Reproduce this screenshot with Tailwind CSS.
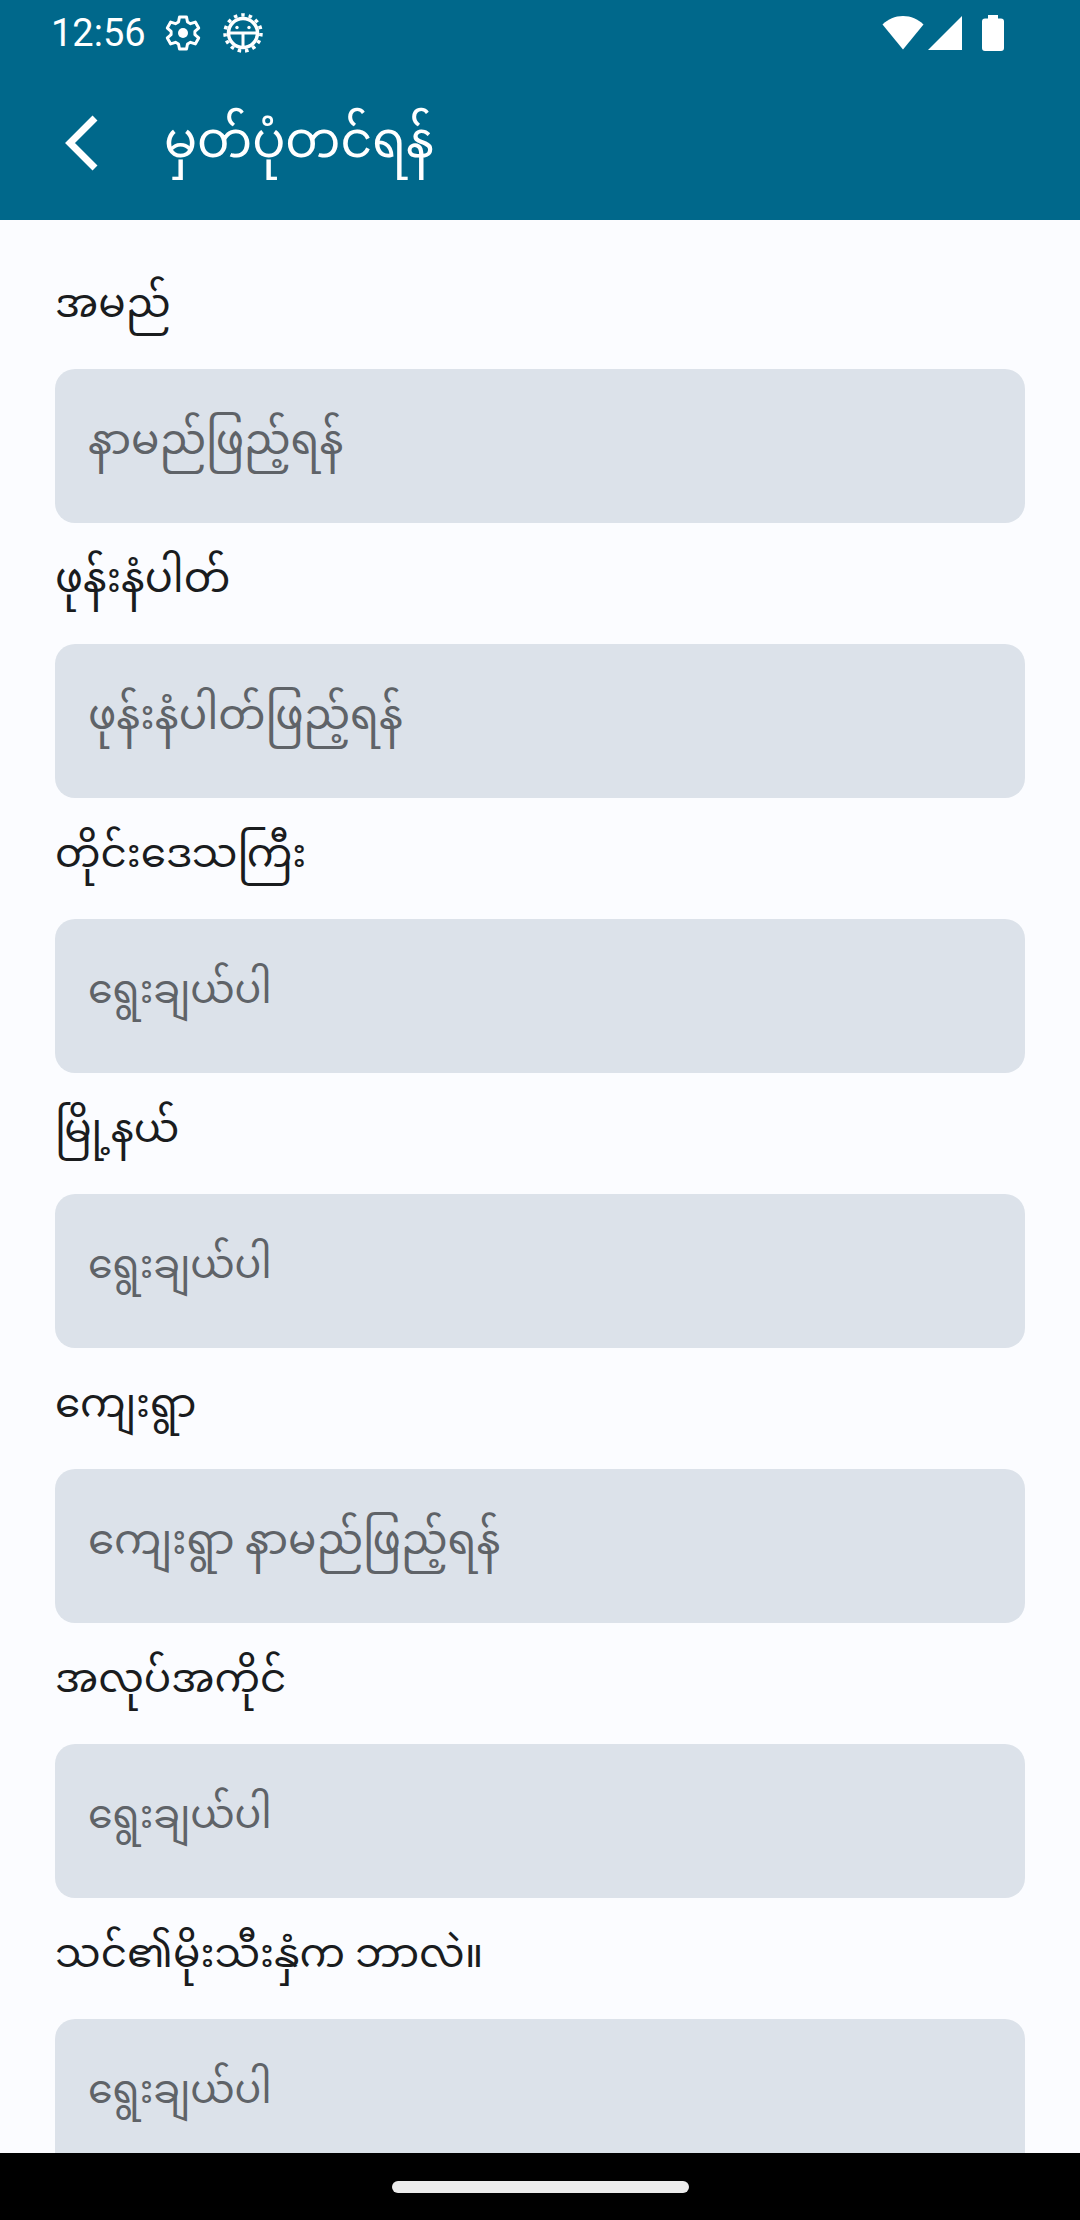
<!DOCTYPE html>
<html lang="my">
<head>
    <meta charset="UTF-8">
    <meta name="viewport" content="width=device-width, initial-scale=1.0">
    <title>မှတ်ပုံတင်ရန်</title>
    <script src="https://cdn.jsdelivr.net/npm/@tailwindcss/browser@4"></script>
</head>
<body class="bg-black font-['Roboto','Noto_Sans','Noto_Sans_Myanmar','Padauk',sans-serif]">
    <div class="w-[1080px] h-[2220px] flex flex-col overflow-hidden">
        <!-- Status bar -->
        <div class="h-[66px] shrink-0 bg-[#00688b] text-white flex items-center pl-[51px] pr-[76px]">
            <span class="text-[38px] leading-none font-['Roboto',sans-serif] w-[112px]">12:56</span>
            <svg class="ml-[1px]" width="38" height="38" viewBox="0 0 38 38" fill="none" stroke="white" stroke-width="3" stroke-linejoin="round">
                <path d="M15.500 3h7l1 5 3 1.700 4.800-1.600 3.400 6-3.800 3.300v3.200l3.800 3.300-3.400 6-4.800-1.600-3 1.700-1 5h-7l-1-5-3-1.700-4.800 1.600-3.400-6 3.800-3.300v-3.200l-3.800-3.300 3.400-6 4.800 1.600 3-1.700z"/>
                <circle cx="19" cy="19" r="5" fill="white" stroke="none"/>
            </svg>
            <svg class="ml-[21px]" width="40" height="40" viewBox="0 0 40 40" fill="none" stroke="white">
                <circle cx="20" cy="20" r="14.500" stroke-width="3.500"/>
                <circle cx="20" cy="20" r="18" stroke-width="3.500" stroke-dasharray="3.500 4"/>
                <path d="M6 20h28M20 20v14" stroke-width="3"/>
                <circle cx="14" cy="14.500" r="1.700" fill="white" stroke="none"/>
                <circle cx="26" cy="14.500" r="1.700" fill="white" stroke="none"/>
            </svg>
            <svg class="ml-auto" width="42" height="36" viewBox="0 0 42 36" fill="white"><path d="M21 34.500 0.500 9.500C6 4.200 13 1 21 1s15 3.200 20.500 8.500z"/></svg>
            <svg class="ml-[4px]" width="34" height="34" viewBox="0 0 34 34" fill="white"><path d="M34 0v34H0z"/></svg>
            <svg class="ml-[20px]" width="22" height="36" viewBox="0 0 22 36" fill="white"><path d="M6 0h10v3.500h3a3 3 0 0 1 3 3V33a3 3 0 0 1-3 3H3a3 3 0 0 1-3-3V6.500a3 3 0 0 1 3-3h3z"/></svg>
        </div>

        <!-- Toolbar -->
        <div class="h-[154px] shrink-0 bg-[#00688b] flex items-center pb-[12px]">
            <svg class="ml-[64px] mt-[12px]" width="34" height="56" viewBox="0 0 34 56" fill="none" stroke="white" stroke-width="7"><path d="M31 3 6 28l25 25"/></svg>
            <h1 class="ml-[66px] mt-[6px] text-[49px] leading-none text-white font-normal">မှတ်ပုံတင်ရန်</h1>
        </div>

        <!-- Form -->
        <div class="h-[1933px] shrink-0 bg-[#fbfcff] px-[55px] pt-[39px] overflow-hidden flex flex-col">
            <div class="h-[110px] shrink-0 flex items-center pb-[21px] text-[40.500px] text-[#1a1c1e]">အမည်</div>
            <div class="h-[154px] shrink-0 rounded-[20px] bg-[#dce2ea] px-[33px] pb-[13px] flex items-center text-[42px] text-[#5f6368] mb-[11px]">နာမည်ဖြည့်ရန်</div>
            <div class="h-[110px] shrink-0 flex items-center pb-[21px] text-[41.500px] text-[#1a1c1e]">ဖုန်းနံပါတ်</div>
            <div class="h-[154px] shrink-0 rounded-[20px] bg-[#dce2ea] px-[33px] pb-[13px] flex items-center text-[42px] text-[#5f6368] mb-[11px]">ဖုန်းနံပါတ်ဖြည့်ရန်</div>
            <div class="h-[110px] shrink-0 flex items-center pb-[21px] text-[40.500px] text-[#1a1c1e]">တိုင်းဒေသကြီး</div>
            <div class="h-[154px] shrink-0 rounded-[20px] bg-[#dce2ea] px-[33px] pb-[13px] flex items-center text-[39.500px] text-[#5f6368] mb-[11px]">ရွေးချယ်ပါ</div>
            <div class="h-[110px] shrink-0 flex items-center pb-[21px] text-[40.500px] text-[#1a1c1e]">မြို့နယ်</div>
            <div class="h-[154px] shrink-0 rounded-[20px] bg-[#dce2ea] px-[33px] pb-[13px] flex items-center text-[39.500px] text-[#5f6368] mb-[11px]">ရွေးချယ်ပါ</div>
            <div class="h-[110px] shrink-0 flex items-center pb-[21px] text-[40.500px] text-[#1a1c1e]">ကျေးရွာ</div>
            <div class="h-[154px] shrink-0 rounded-[20px] bg-[#dce2ea] px-[33px] pb-[13px] flex items-center text-[42px] text-[#5f6368] mb-[11px]">ကျေးရွာ နာမည်ဖြည့်ရန်</div>
            <div class="h-[110px] shrink-0 flex items-center pb-[21px] text-[40.500px] text-[#1a1c1e]">အလုပ်အကိုင်</div>
            <div class="h-[154px] shrink-0 rounded-[20px] bg-[#dce2ea] px-[33px] pb-[13px] flex items-center text-[39.500px] text-[#5f6368] mb-[11px]">ရွေးချယ်ပါ</div>
            <div class="h-[110px] shrink-0 flex items-center pb-[21px] text-[40.500px] text-[#1a1c1e]">သင်၏မိုးသီးနှံက ဘာလဲ။</div>
            <div class="h-[154px] shrink-0 rounded-[20px] bg-[#dce2ea] px-[33px] pb-[13px] flex items-center text-[39.500px] text-[#5f6368] mb-[11px]">ရွေးချယ်ပါ</div>
        </div>

        <!-- Nav bar -->
        <div class="flex-1 bg-black flex items-center justify-center">
            <div class="w-[297px] h-[12px] rounded-full bg-[#ececec]"></div>
        </div>
    </div>
</body>
</html>
